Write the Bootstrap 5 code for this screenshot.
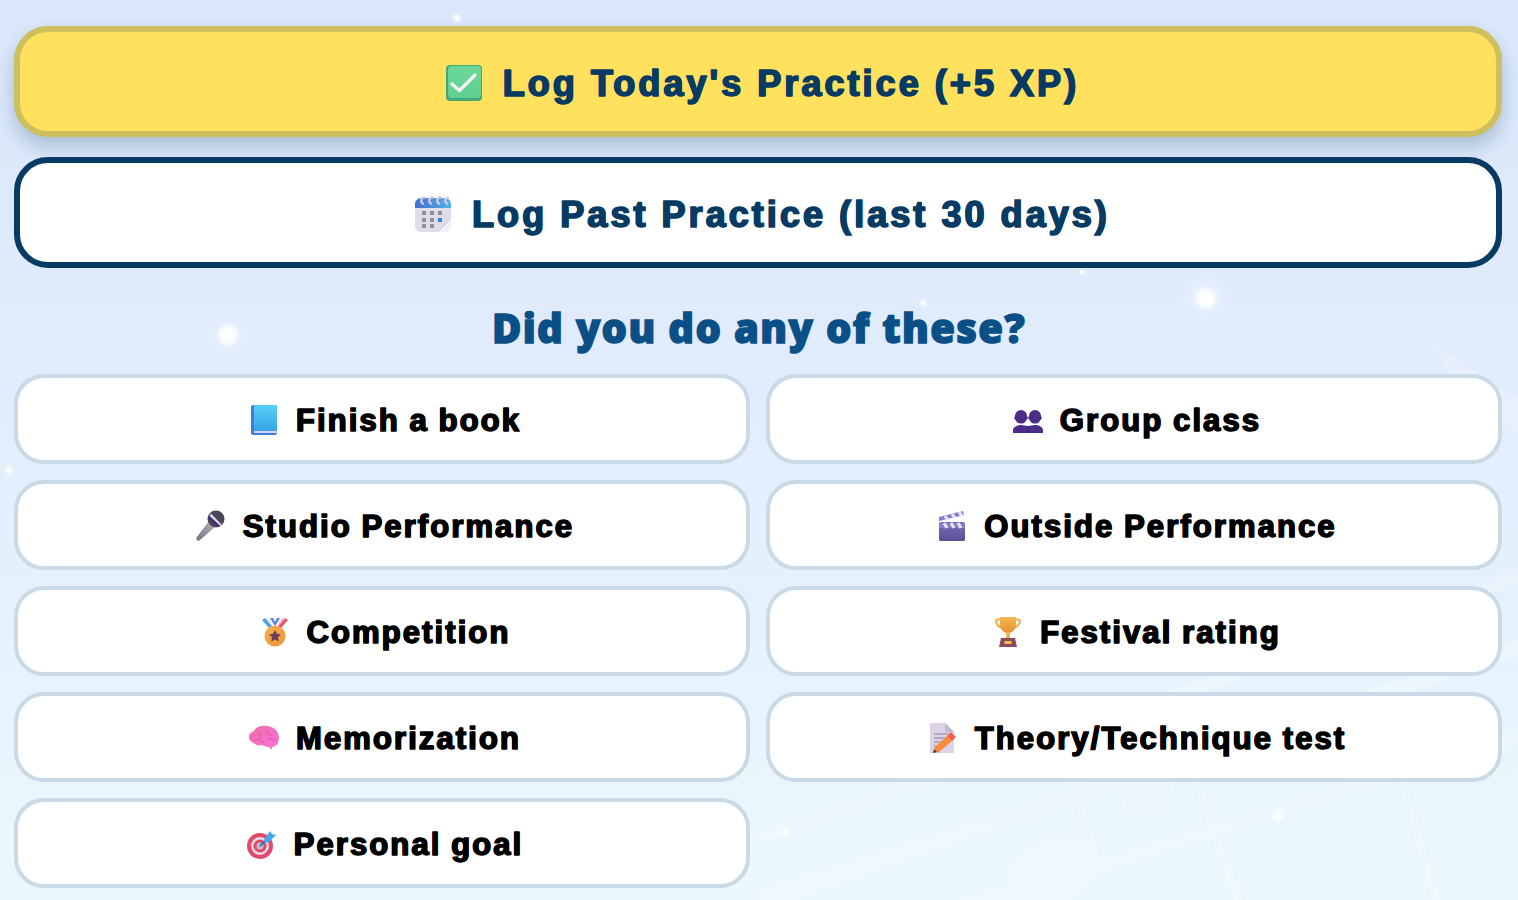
<!DOCTYPE html>
<html lang="en">
<head>
  <meta charset="UTF-8">
  <meta name="viewport" content="width=device-width, initial-scale=1.0">
  <title>Log Practice</title>
  <link href="https://cdn.jsdelivr.net/npm/bootstrap@5.3.3/dist/css/bootstrap.min.css" rel="stylesheet">
  <style>
    body {
      min-height: 900px;
      height: 900px;
      overflow: hidden;
      position: relative;
      font-family: "Liberation Sans", Arial, sans-serif;
      background: linear-gradient(180deg, #dbe7fb 0%, #e1edfc 45%, #e6f3fd 72%, #ebf8fe 100%);
    }
    .backdrop { position: absolute; inset: 0; width: 100%; height: 100%; z-index: 0; }
    .practice-wrap { position: relative; z-index: 1; padding: 26px 16px 0 14px; }
    .log-btn {
      height: 111px;
      padding: 3px 0 0;
      border-radius: 34px;
      border-width: 6px;
      border-style: solid;
      font-size: 36px;
      font-weight: 700;
      letter-spacing: 3.05px;
      color: #073b63;
      -webkit-text-stroke: 1.4px currentColor;
      text-shadow: .7px 0 currentColor, -.7px 0 currentColor;
      gap: 12px;
    }
    .log-btn span { padding-top: 2px; }
    .log-today { background: #ffe15d; border-color: #cdbe5e; box-shadow: 0 10px 20px rgba(7,59,99,.25); }
    .log-past { background: #fff; border-color: #073b63; margin-top: 20px; }
    .log-btn svg { width: 54px; height: 38px; flex: none; }
    .these-title {
      font-family: "Open Sans", sans-serif;
      font-size: 40px;
      font-weight: 800;
      letter-spacing: 1.35px;
      -webkit-text-stroke: 1.4px currentColor;
      color: #0b4f87;
      text-align: center;
      line-height: 48px;
      margin: 36px 0 22px;
      padding-left: 2px;
    }
    .event-grid { display: grid; grid-template-columns: 1fr 1fr; gap: 16px; }
    .event-btn {
      height: 90px;
      padding: 2px 0 0;
      background: #fff;
      border: 4px solid #c9d9e6;
      border-radius: 30px;
      font-size: 31px;
      font-weight: 700;
      letter-spacing: 2.1px;
      word-spacing: -1px;
      color: #000;
      -webkit-text-stroke: 1.3px currentColor;
      text-shadow: .6px 0 currentColor, -.6px 0 currentColor;
      gap: 11px;
    }
    .event-btn span { padding-top: 2px; }
    .event-btn svg { width: 42px; height: 32px; flex: none; }
  </style>
</head>
<body>
  <svg class="backdrop" viewBox="0 0 1518 900" preserveAspectRatio="none" aria-hidden="true">
    <defs>
      <radialGradient id="glow"><stop offset="0" stop-color="#fff" stop-opacity="1"/><stop offset=".35" stop-color="#fff" stop-opacity=".8"/><stop offset=".5" stop-color="#fff" stop-opacity=".2"/><stop offset="1" stop-color="#fff" stop-opacity="0"/></radialGradient>
    </defs>
    <g fill="url(#glow)">
      <circle cx="228" cy="335" r="24"/><circle cx="1206" cy="298" r="24"/><circle cx="457" cy="18" r="8"/><circle cx="923" cy="303" r="6"/>
      <circle cx="9" cy="470" r="8"/><circle cx="1082" cy="272" r="5"/><circle cx="1278" cy="817" r="10"/><circle cx="785" cy="832" r="6"/>
    </g>
    <g fill="#fff" opacity=".2">
      <path d="M760 830 1518 570v14L760 844z"/><path d="M760 890 1518 640v16L790 900h-30z"/><path d="M960 900 1518 730v14L1010 900z"/>
      <ellipse cx="1052" cy="872" rx="48" ry="34" transform="rotate(-25 1052 872)"/>
      <ellipse cx="1148" cy="796" rx="27" ry="20" transform="rotate(-25 1148 796)"/>
      <path d="M1067 780h8l30 90h-8z"/><path d="M1192 780h8l42 120h-8z"/><path d="M1398 780h8l34 120h-8z"/>
      <path d="M1432 342l86 58v34l-62-44z"/>
    </g>
  </svg>

  <div class="practice-wrap">
    <button type="button" class="log-btn log-today w-100 d-flex align-items-center justify-content-center">
      <svg viewBox="-8 0 54 38"><defs><linearGradient id="chk" x1="0" y1="0" x2="0" y2="1"><stop offset="0" stop-color="#6bd89a"/><stop offset="1" stop-color="#62cf92"/></linearGradient></defs><rect x="1" y="1" width="36" height="36" rx="4" fill="#46a878"/><rect x="3" y="2" width="33" height="32" rx="4" fill="url(#chk)"/><path d="M7 20l7.5 6.5L30 11" fill="none" stroke="#f6f4fa" stroke-width="3.2" stroke-linecap="round" stroke-linejoin="round"/></svg>
      <span>Log Today's Practice (+5 XP)</span>
    </button>
    <button type="button" class="log-btn log-past w-100 d-flex align-items-center justify-content-center">
      <svg viewBox="-8 0 54 38"><defs><linearGradient id="calh" x1="0" y1="0" x2="1" y2="0"><stop offset="0" stop-color="#3f6fd0"/><stop offset="1" stop-color="#5ab0e8"/></linearGradient></defs><path d="M1 12h36v19a6 6 0 0 1-6 6H7a6 6 0 0 1-6-6z" fill="#e0dce9"/><path d="M1 13V9a6 6 0 0 1 6-6h24a6 6 0 0 1 6 6v4z" fill="url(#calh)"/><g fill="none" stroke="#d4d0da" stroke-width="2.2"><path d="M10 9A3.500 3.500 0 0 1 9 2.500h3"/><path d="M18 9A3.500 3.500 0 0 1 17 2.500h3"/><path d="M26 9A3.500 3.500 0 0 1 25 2.500h3"/><path d="M34 9A3.500 3.500 0 0 1 33 2.500h2"/></g><g fill="#918f99"><rect x="8" y="16" width="4" height="4"/><rect x="16" y="16" width="4" height="4"/><rect x="24" y="16" width="4" height="4"/><rect x="8" y="23" width="4" height="4"/><rect x="16" y="23" width="4" height="4"/><rect x="8" y="29" width="4" height="4"/><rect x="16" y="29" width="4" height="4"/></g><rect x="24" y="23" width="4" height="4" fill="#2f88e0"/><path d="M37 24 24 37h7a6 6 0 0 0 6-6z" fill="#f3f1f7"/><path d="M37 24l-7 5-6 8z" fill="#cfcad8"/></svg>
      <span>Log Past Practice (last 30 days)</span>
    </button>

    <h2 class="these-title">Did you do any of these?</h2>

    <div class="event-grid">
      <button type="button" class="event-btn d-flex align-items-center justify-content-center">
        <svg viewBox="0 0 32 32"><defs><linearGradient id="bk" x1="0" y1="0" x2="0" y2="1"><stop offset="0" stop-color="#58d0f6"/><stop offset="1" stop-color="#36a2e6"/></linearGradient></defs><rect x="3" y="1" width="26" height="30" rx="2" fill="#3a7fd8"/><rect x="6" y="1" width="23" height="26" rx="1" fill="url(#bk)"/><rect x="6" y="27" width="23" height="2" fill="#d9cdf0"/></svg>
        <span>Finish a book</span>
      </button>
      <button type="button" class="event-btn d-flex align-items-center justify-content-center">
        <svg viewBox="0 0 32 32"><g fill="#4b2d88" transform="translate(0 3)"><path d="M3 9a6 6 0 0 1 12 0l1 2-1.500 2a6 6 0 0 1-11 0L2 11z"/><path d="M17 9a6 6 0 0 1 12 0l1 2-1.500 2a6 6 0 0 1-11 0L16 11z"/><path d="M1 26v-3c0-3 4-5 8-5l7 1 7-1c4 0 8 2 8 5v3z"/></g><path d="M16 22v7" stroke="#3a2270" stroke-width="1"/></svg>
        <span>Group class</span>
      </button>
      <button type="button" class="event-btn d-flex align-items-center justify-content-center">
        <svg viewBox="0 0 32 32"><defs><linearGradient id="mc" x1="0" y1="1" x2="1" y2="0"><stop offset="0" stop-color="#77727f"/><stop offset="1" stop-color="#b8b3be"/></linearGradient></defs><path d="M1.500 27.500 14 11l6 6L4.500 30.500c-2 .8-3.800-1-3-3z" fill="url(#mc)"/><circle cx="21" cy="9" r="8.500" fill="#4b4658"/><path d="M13 8l10 9 3-1.500L15 5z" fill="#43297c"/><path d="M14.500 6l11 10 1.500-1L16 3.500z" fill="#dcd8e2"/></svg>
        <span>Studio Performance</span>
      </button>
      <button type="button" class="event-btn d-flex align-items-center justify-content-center">
        <svg viewBox="0 0 32 32"><defs><linearGradient id="cl" x1="0" y1="0" x2="0" y2="1"><stop offset="0" stop-color="#7a6cba"/><stop offset="1" stop-color="#5c4f96"/></linearGradient></defs><rect x="3" y="12" width="26" height="19" rx="1.500" fill="url(#cl)"/><rect x="3" y="13" width="26" height="5" fill="#8a7acb"/><path d="M8 13l3 5M15 13l3 5M22 13l3 5" stroke="#e9e4f8" stroke-width="3"/><path d="M3 7 27 1l1 4L3 11z" fill="#8a7acb"/><path d="M9 6l3 4M16 4l3 4M23 2l3 4" stroke="#e9e4f8" stroke-width="3"/></svg>
        <span>Outside Performance</span>
      </button>
      <button type="button" class="event-btn d-flex align-items-center justify-content-center">
        <svg viewBox="0 0 32 32"><defs><linearGradient id="md" x1="0" y1="0" x2="1" y2="1"><stop offset="0" stop-color="#f8b04a"/><stop offset="1" stop-color="#ee9438"/></linearGradient></defs><path d="M3 4l7 8 3-2-7-8z" fill="#4a9ef0"/><path d="M29 4l-7 8-3-2 7-8z" fill="#f2506e"/><path d="M11 2l5 8 5-8h-3l-2 4-2-4z" fill="#4a80e8"/><path d="M6 2l5 6 2-1-4-5z" fill="#e8e2f2"/><path d="M26 2l-5 6-2-1 4-5z" fill="#e8c8dc"/><circle cx="16" cy="20" r="10.500" fill="url(#md)"/><path d="M16 14l1.900 3.800 4.100.6-3 2.900.7 4.200-3.700-2-3.700 2 .7-4.200-3-2.900 4.100-.6z" fill="#6e3f5c"/></svg>
        <span>Competition</span>
      </button>
      <button type="button" class="event-btn d-flex align-items-center justify-content-center">
        <svg viewBox="0 0 32 32"><defs><linearGradient id="tr" x1="0" y1="0" x2="0" y2="1"><stop offset="0" stop-color="#f8b84e"/><stop offset="1" stop-color="#ea8e3a"/></linearGradient></defs><path d="M9 3.500H5.500c-2.500 0-2 6 4.500 8.500M23 3.500h3.500c2.500 0 2 6-4.500 8.500" fill="none" stroke="#f2b040" stroke-width="2"/><path d="M8 1h16v7c0 6-4 9-8 9s-8-3-8-9z" fill="url(#tr)"/><rect x="14" y="16" width="4" height="6" fill="#f2b24a"/><path d="M9 22h14l2 9H7z" fill="#8c4c5e"/><rect x="12.500" y="25" width="7" height="3" fill="#f5c04a"/></svg>
        <span>Festival rating</span>
      </button>
      <button type="button" class="event-btn d-flex align-items-center justify-content-center">
        <svg viewBox="0 0 32 32"><defs><linearGradient id="br" x1="0" y1="0" x2="1" y2="1"><stop offset="0" stop-color="#ee6fa8"/><stop offset="1" stop-color="#fc70dc"/></linearGradient></defs><path d="M6 9c1-3 5-5 9-5 7-1 16 3 16 12 0 5-3 9-7 9l-.5 3-2.500-3c-3 0-5-1-7-2-3 1-7 0-8-2-3-1-6-4-5-7 .500-3 3-4 5-5z" fill="url(#br)"/><path d="M9 11c3 0 4 2 3 5M19 8c-1 3 1 5 5 5M7 18c4-1 7 0 8 3M20 17c3-1 5 0 6 2" fill="none" stroke="#d84e9e" stroke-width="1"/></svg>
        <span>Memorization</span>
      </button>
      <button type="button" class="event-btn d-flex align-items-center justify-content-center">
        <svg viewBox="0 0 32 32"><path d="M3 1h15l9 9v21H3z" fill="#dcd4e6"/><path d="M18 1l9 9h-9z" fill="#c4b8d0"/><path d="M7 12h14M7 16h14M7 20h10M7 24h5" stroke="#a8a0b0" stroke-width="1.500"/><path d="M6 31l2-6 12-11 5 5-13 11z" fill="#f78c3c"/><path d="M6 31l1-4 3 3z" fill="#5a3a3a"/><path d="M20 14l4-4 5 5-4 4z" fill="#f4604c"/></svg>
        <span>Theory/Technique test</span>
      </button>
      <button type="button" class="event-btn d-flex align-items-center justify-content-center">
        <svg viewBox="0 0 32 32"><circle cx="14" cy="18" r="13" fill="#e2486a"/><circle cx="14" cy="18" r="9" fill="#e8dce6"/><circle cx="14" cy="18" r="6.500" fill="#e2486a"/><circle cx="14" cy="18" r="3.500" fill="#c6bdcc"/><path d="M14 18 24 8" stroke="#3b6fc0" stroke-width="1.800"/><path d="M18 12l6-9 2 3 4 1-7 7-4 1z" fill="#42a8f0"/></svg>
        <span>Personal goal</span>
      </button>
    </div>
  </div>

  <script src="https://cdn.jsdelivr.net/npm/bootstrap@5.3.3/dist/js/bootstrap.bundle.min.js"></script>
</body>
</html>
